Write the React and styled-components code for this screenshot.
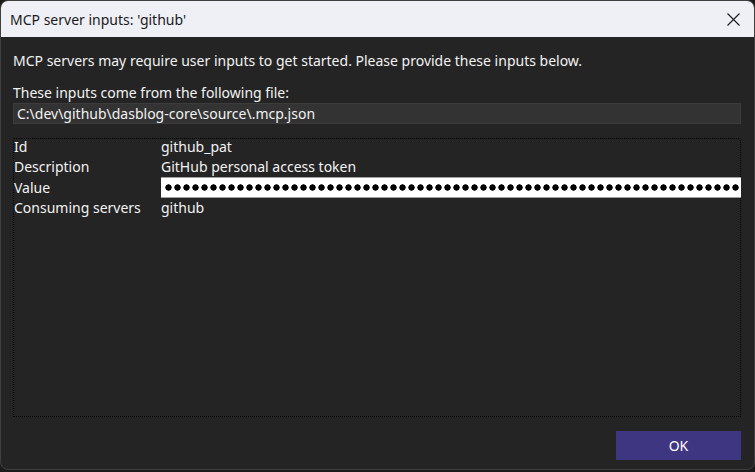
import React from "react";
import styled, { createGlobalStyle } from "styled-components";

const Global = createGlobalStyle`
  html, body { margin: 0; padding: 0; background: #1b1b1b; }
  body { font-family: "Noto Sans", "Open Sans", sans-serif; }
  * { box-sizing: border-box; }
`;

const Window = styled.div`
  width: 755px;
  height: 470px;
  border: 1px solid #3f3f3f;
  border-radius: 8px;
  overflow: hidden;
  background: #242424;
  display: flex;
  flex-direction: column;
`;

const TitleBar = styled.div`
  height: 36px;
  flex: none;
  background: #eff0f6;
  display: flex;
  align-items: center;
  justify-content: space-between;
  padding: 0 14px 0 9px;
  color: #1a1a1a;
  font-size: 14px;
`;

const CloseButton = styled.button`
  border: 0;
  background: none;
  padding: 0;
  width: 14px;
  height: 14px;
  display: flex;
  align-items: center;
  justify-content: center;
  cursor: pointer;
`;

const Body = styled.div`
  flex: 1;
  display: flex;
  flex-direction: column;
  padding: 14px 13px 0 12px;
  color: #f2f2f2;
  font-size: 14px;
`;

const Line = styled.div`
  line-height: 20px;
  margin-top: ${(p) => p.$mt || 0}px;
`;

const PathBox = styled.div`
  height: 21px;
  background: #333333;
  border: 1px solid #3c3c3c;
  padding: 0 3px;
  line-height: 19px;
  white-space: nowrap;
`;

const InputsBox = styled.div`
  margin-top: 14px;
  height: 279px;
  border: 1px dotted #000;
`;

const Grid = styled.div`
  margin-top: -2px;
  display: grid;
  grid-template-columns: 147px 1fr;
  grid-template-rows: 20px 20.5px 20.5px 20.5px;
  align-items: center;
`;

const Label = styled.div`
  line-height: 18px;
  white-space: nowrap;
`;

const Value = styled.div`
  line-height: 18px;
  white-space: nowrap;
`;

const Masked = styled.div`
  height: 21px;
  margin-right: -1px;
  padding-left: 4px;
  background: #ffffff;
  border-top: 1px solid #a0a0a0;
  border-bottom: 1px solid #a0a0a0;
  overflow: hidden;
`;

const Dots = styled.div`
  height: 100%;
  background-image: radial-gradient(circle at 3.5px 50%, #000 2.9px, transparent 3.4px);
  background-size: 9px 100%;
  background-repeat: repeat-x;
`;

const Footer = styled.div`
  display: flex;
  justify-content: flex-end;
  margin-top: 14px;
`;

const OkButton = styled.button`
  width: 125px;
  height: 29px;
  border: 0;
  background: #3f3682;
  color: #ffffff;
  font-family: "Noto Sans", "Open Sans", sans-serif;
  font-size: 14px;
  cursor: pointer;
`;

const rows = [
  ["Id", "github_pat"],
  ["Description", "GitHub personal access token"],
  ["Value", null],
  ["Consuming servers", "github"],
];

export default function App() {
  return (
    <>
      <Global />
      <Window>
        <TitleBar>
          <span>MCP server inputs: 'github'</span>
          <CloseButton aria-label="Close">
            <svg width="13" height="13" viewBox="0 0 13 13">
              <path d="M0.5 0.5 L12.5 12.5 M12.5 0.5 L0.5 12.5" stroke="#1a1a1a" strokeWidth="1.1" fill="none" />
            </svg>
          </CloseButton>
        </TitleBar>
        <Body>
          <Line>MCP servers may require user inputs to get started. Please provide these inputs below.</Line>
          <Line $mt={12}>These inputs come from the following file:</Line>
          <PathBox>C:\dev\github\dasblog-core\source\.mcp.json</PathBox>
          <InputsBox>
            <Grid>
              {rows.map(([k, v]) => (
                <React.Fragment key={k}>
                  <Label>{k}</Label>
                  {v === null ? (
                    <Masked>
                      <Dots />
                    </Masked>
                  ) : (
                    <Value>{v}</Value>
                  )}
                </React.Fragment>
              ))}
            </Grid>
          </InputsBox>
          <Footer>
            <OkButton>OK</OkButton>
          </Footer>
        </Body>
      </Window>
    </>
  );
}
